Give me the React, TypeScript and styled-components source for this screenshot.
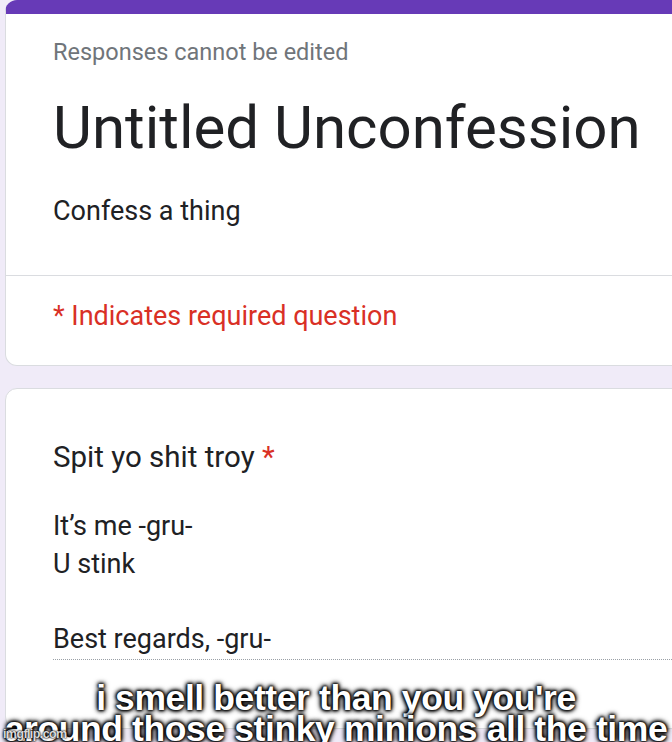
import styled, { createGlobalStyle } from "styled-components"

const GlobalStyle = createGlobalStyle`
    html, body {
        margin: 0;
        padding: 0;
        background-color: #f0ebf8;
    }
`

const Page = styled.main`
    position: relative;
    width: 672px;
    height: 742px;
    overflow: hidden;
    background-color: #f0ebf8;
    padding-left: 5px;
    box-sizing: border-box;
    display: flex;
    flex-direction: column;
    gap: 22px;
    font-family: Roboto, "Liberation Sans", sans-serif;
`

const Card = styled.section<{ $accent?: boolean }>`
    width: 700px;
    background-color: #ffffff;
    border: 1px solid #dadce0;
    border-radius: 12px;
    box-sizing: border-box;
    overflow: hidden;
    border-top: ${(p) => (p.$accent ? "14px solid #673ab7" : "1px solid #dadce0")};
    flex-shrink: 0;
`

const CardBody = styled.div`
    padding: 22px 47px 0;
`

const Notice = styled.div`
    font-size: 23.5px;
    color: #70757a;
    line-height: 32px;
`

const Title = styled.h1`
    margin: 20px 0 0;
    font-size: 60px;
    font-weight: 400;
    line-height: 80px;
    color: #202124;
`

const Description = styled.p`
    margin: 27px 0 0;
    font-size: 27px;
    line-height: 32px;
    color: #202124;
    padding-bottom: 48px;
`

const Divider = styled.hr`
    margin: 0;
    border: none;
    border-top: 1px solid #dadce0;
`

const Required = styled.p`
    margin: 0;
    padding: 24px 47px 33px;
    font-size: 27px;
    line-height: 32px;
    color: #d93025;
`

const Question = styled.div`
    padding: 50px 47px 0;
    font-size: 29.5px;
    line-height: 36px;
    color: #202124;
`

const Star = styled.span`
    color: #d93025;
`

const Answer = styled.div`
    margin: 33px 0 68px 47px;
    padding-bottom: 1px;
    border-bottom: 1px dotted #9aa0a6;
    font-size: 27px;
    line-height: 37.5px;
    color: #202124;
    white-space: pre-line;
    height: 150px;
`

const Caption = styled.div`
    position: absolute;
    left: 0;
    right: 0;
    bottom: -3px;
    text-align: center;
    font-family: "Liberation Sans", Arial, sans-serif;
    font-weight: 700;
    font-size: 35.5px;
    line-height: 31px;
    letter-spacing: -0.4px;
    color: #ffffff;
    text-shadow:
        0 0 2px #000,
        0 0 3px #000,
        0 0 4px #000,
        0 0 5px #000,
        0 0 6px #000;
`

const Watermark = styled.span`
    position: absolute;
    left: 3px;
    bottom: 1px;
    font-family: "Liberation Sans", Arial, sans-serif;
    font-weight: 700;
    font-size: 12.5px;
    letter-spacing: -0.6px;
    color: rgba(255, 255, 255, 0.85);
    text-shadow: 0 0 2px #000, 0 0 2px #000;
`

export default function App() {
    return (
        <>
            <GlobalStyle />
            <Page>
                {/* Form header */}
                <Card $accent>
                    <CardBody>
                        <Notice>Responses cannot be edited</Notice>
                        <Title>Untitled Unconfession</Title>
                        <Description>Confess a thing</Description>
                    </CardBody>
                    <Divider />
                    <Required>* Indicates required question</Required>
                </Card>

                {/* Question card */}
                <Card>
                    <Question>
                        Spit yo shit troy <Star>*</Star>
                    </Question>
                    <Answer>{"It’s me -gru-\nU stink\n\nBest regards, -gru-"}</Answer>
                </Card>

                <Caption>
                    i smell better than you you're
                    <br />
                    around those stinky minions all the time
                </Caption>
                <Watermark>imgflip.com</Watermark>
            </Page>
        </>
    )
}
